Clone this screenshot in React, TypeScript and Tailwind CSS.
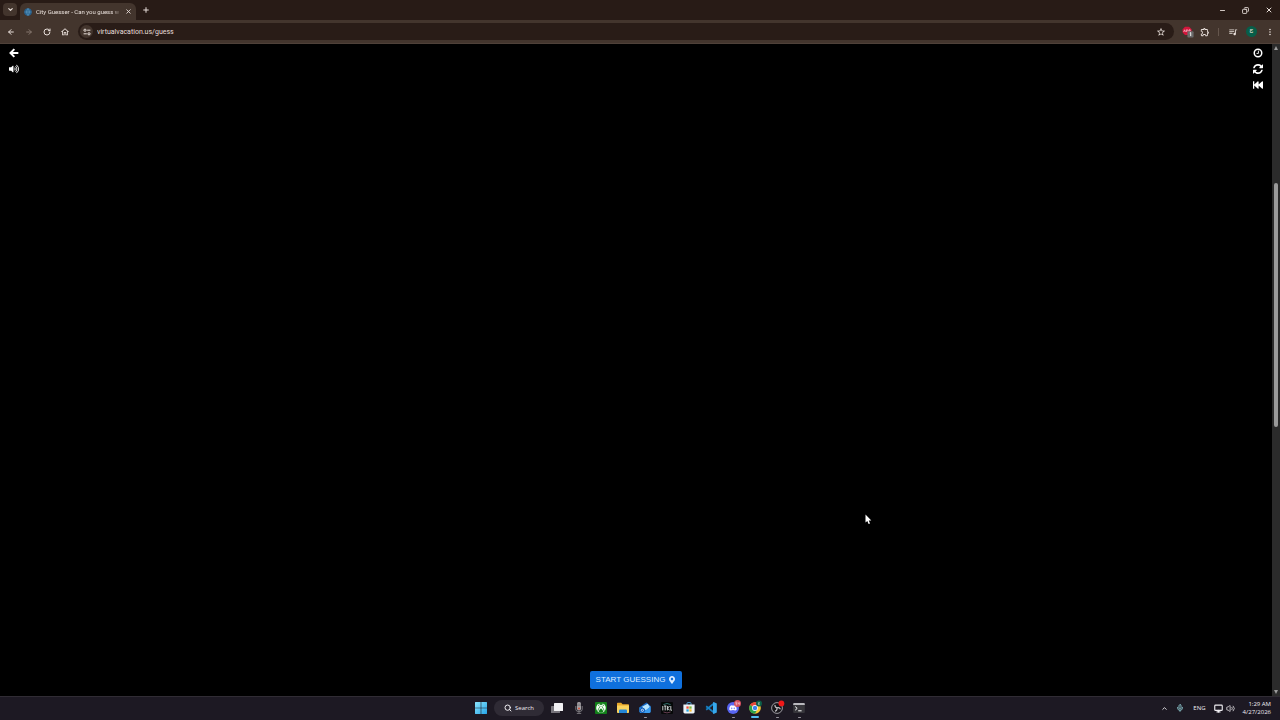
import React from "react";
import { FaFastBackward, FaMapMarkerAlt, FaVolumeUp, FaDiscord } from "react-icons/fa";
import {
  MdMoreVert,
  MdOutlineExtension,
  MdOutlineHome,
  MdQueueMusic,
  MdStarBorder,
} from "react-icons/md";
import {
  ArrowLeft,
  ArrowRight,
  ChevronDown,
  ChevronUp,
  Copy,
  Mic,
  Minus,
  Monitor,
  Plus,
  RotateCw,
  Search,
  Volume2,
  X,
} from "lucide-react";

interface TaskbarApp {
  name: string;
  icon: React.ReactNode;
  state?: "open" | "active";
}

const BackIcon = () => (
  <svg viewBox="0 0 12 12" className="size-[10px]">
    <path
      d="M6.4 1.4L1.8 6L6.4 10.6M2.4 6H11.2"
      fill="none"
      stroke="currentColor"
      strokeWidth="2.4"
    />
  </svg>
);

const ClockIcon = () => (
  <svg viewBox="0 0 12 12" className="size-[10px]">
    <circle cx="6" cy="6" r="4.5" fill="none" stroke="currentColor" strokeWidth="1.8" />
    <path d="M6.5 3.2V6.5H4.2" fill="none" stroke="currentColor" strokeWidth="1.1" />
  </svg>
);

const RefreshIcon = () => (
  <svg viewBox="0 0 1536 1536" className="size-[10px]" fill="currentColor">
    <path d="M1511 928q0 5-1 7-64 268-268 434.500T764 1536q-146 0-282.500-55T238 1324l-129 129q-19 19-45 19t-45-19-19-45V960q0-26 19-45t45-19h448q26 0 45 19t19 45-19 45l-137 137q71 66 161 102t187 36q134 0 250-65t186-179q11-17 53-117 8-23 30-23h192q13 0 22.500 9.500t9.500 22.500zM1536 128v448q0 26-19 45t-45 19h-448q-26 0-45-19t-19-45 19-45l138-138Q969 256 768 256q-134 0-250 65T332 500q-11 17-53 117-8 23-30 23H50q-13 0-22.500-9.500T18 608v-7q65-268 270-434.500T768 0q146 0 284 55.500T1297 212l130-129q19-19 45-19t45 19 19 45z" />
  </svg>
);

const WindowsIcon = () => (
  <svg viewBox="0 0 12 12" className="size-3">
    <defs>
      <linearGradient id="win" x1="0" y1="0" x2="1" y2="1">
        <stop offset="0" stopColor="#8be4fb" />
        <stop offset="1" stopColor="#26a5e8" />
      </linearGradient>
    </defs>
    <path
      fill="url(#win)"
      d="M0 .4Q0 0 .4 0H5.7V5.7H0ZM6.3 0H11.6Q12 0 12 .4V5.7H6.3ZM0 6.3H5.7V12H.4Q0 12 0 11.6ZM6.3 6.3H12V11.6Q12 12 11.6 12H6.3Z"
    />
  </svg>
);

const TaskViewIcon = () => (
  <svg viewBox="0 0 12 12" className="size-3">
    <rect x="0" y="4" width="9" height="7" rx=".6" fill="#77747b" />
    <rect x="3" y="1" width="9" height="8" rx=".6" fill="#f1f0f3" />
  </svg>
);

const RecorderIcon = () => (
  <svg viewBox="0 0 12 12" className="size-3">
    <path
      d="M2.8 4V7.5Q2.8 9.6 6 9.6T9.2 7.5V4M6 9.6V11.4M3.8 11.4H8.2"
      fill="none"
      stroke="#77757a"
      strokeWidth="1"
    />
    <rect x="4" y="0" width="4" height="8.4" rx="1.6" fill="#a5a2a6" />
    <path d="M4 2.2H8M4 3.6H8" stroke="#6d6a70" strokeWidth=".6" />
    <circle cx="6" cy="6.4" r="1" fill="#d9533d" />
  </svg>
);

const XboxIcon = () => (
  <svg viewBox="0 0 12 12" className="size-3">
    <rect width="12" height="12" rx="1" fill="#12801a" />
    <circle cx="6" cy="6" r="4.8" fill="#f4fff4" />
    <path d="M3.4 2Q5 2.2 6 3.2Q7 2.2 8.6 2Q7.4 1.100 6 1.100T3.400 2Z" fill="#12801a" />
    <path
      d="M2.6 9.6Q3.4 6.4 5 4.6Q4 3.400 3 3M9.400 9.600Q8.600 6.400 7 4.600Q8 3.400 9 3"
      fill="none"
      stroke="#12801a"
      strokeWidth=".7"
    />
    <path d="M6 6.200Q8 7.800 8.400 9.900Q6 11.400 3.600 9.900Q4 7.800 6 6.200Z" fill="#12801a" />
  </svg>
);

const FolderIcon = () => (
  <svg viewBox="0 0 12 12" className="size-3">
    <path d="M0 1.6Q0 .8 .8 .8H4.2L5.6 2.2H11.2Q12 2.2 12 3V6H0Z" fill="#e9a92c" />
    <path d="M0 3.6H12V10.2Q12 11 11.2 11H.8Q0 11 0 10.2Z" fill="#fbd45e" />
    <path d="M2 11V8.600Q2 7.600 3 7.600H9Q10 7.600 10 8.600V11Z" fill="#2486d6" />
  </svg>
);

const MailIcon = () => (
  <svg viewBox="0 0 12 12" className="size-3">
    <path d="M.5 5.2L7.4 .4L11.6 4V9.6Q11.6 11 10.2 11H2Q.5 11 .5 9.6Z" fill="#1466c3" />
    <path d="M3 4.8L8.6 1.8L11 5L6.8 8.6Z" fill="#b7e5ff" />
    <path d="M.5 5.2L6.6 8.4L11.6 4.2V9.6Q11.6 11 10.2 11H2Q.5 11 .5 9.6Z" fill="#3b9df0" />
    <circle cx="3.4" cy="8.3" r="2.6" fill="#1360bd" />
    <circle cx="3.4" cy="8.3" r="1.1" fill="none" stroke="#fff" strokeWidth=".7" />
  </svg>
);

const ControlsIcon = () => (
  <svg viewBox="0 0 12 12" className="size-3">
    <rect width="12" height="12" rx="1" fill="#060808" />
    <path d="M2.4 2.6Q6 .4 9.6 2.6" fill="none" stroke="#3d8b84" strokeWidth=".8" />
    <path d="M2.4 10Q6 11.8 9.6 10" fill="none" stroke="#8b5570" strokeWidth=".7" />
    <path
      d="M1.800 4V8.400M3 4H5.400M4.200 4V8.400M6.400 4V8.400M8.600 4L6.600 6.200L8.600 8.400M9.800 4V8.200H11"
      fill="none"
      stroke="#dfe5e4"
      strokeWidth=".9"
    />
  </svg>
);

const StoreIcon = () => (
  <svg viewBox="0 0 12 12" className="size-3">
    <path d="M4 3V1.4Q4 .6 4.8 .6H7.2Q8 .6 8 1.4V3" fill="none" stroke="#56b5ed" strokeWidth=".9" />
    <path d="M.4 2.6H11.6V10Q11.6 11.4 10.2 11.4H1.8Q.4 11.4 .4 10Z" fill="#edf3f8" />
    <path d="M3.4 4.4H5.7V6.7H3.4Z" fill="#f0533a" />
    <path d="M6.3 4.4H8.6V6.7H6.3Z" fill="#7cba35" />
    <path d="M3.4 7.3H5.7V9.6H3.4Z" fill="#28a6e5" />
    <path d="M6.3 7.3H8.6V9.6H6.3Z" fill="#fbb92c" />
  </svg>
);

const CodeIcon = () => (
  <svg viewBox="0 0 12 12" className="size-3">
    <path d="M1.200 4.200L9 10.600M1.200 7.800L9 1.400" stroke="#1680c4" strokeWidth="1.800" />
    <path d="M8.600 0L11.800 1.500V10.500L8.600 12L8 11.400V.6Z" fill="#37a8ec" />
  </svg>
);

const DiscordIcon = () => (
  <span className="relative flex size-3 items-center justify-center rounded-full bg-[#5865f2] text-white">
    <FaDiscord className="size-2" />
    <span className="absolute -top-[2px] -right-[2px] flex size-[7px] items-center justify-center rounded-full bg-[#d5505f]">
      <svg viewBox="0 0 6 6" className="size-[5px]">
        <path
          d="M2.4 1.4H1V3H2.2V4.6H.8M3.6 1.4V3.2H5.2M5.2 1.4V4.6"
          fill="none"
          stroke="#f7d9dc"
          strokeWidth=".7"
        />
      </svg>
    </span>
  </span>
);

const ChromeIcon = () => (
  <svg viewBox="0 0 12 12" className="size-3 overflow-visible">
    <circle cx="6" cy="6" r="5.8" fill="#f9c632" />
    <path d="M6 6L.98 3.1A5.8 5.8 0 0 1 11.02 3.1L6 3.4Z" fill="#e8453c" />
    <path d="M6 6L.98 3.1A5.8 5.8 0 0 0 6 11.8L8.2 7.4Z" fill="#2ba24c" />
    <circle cx="6" cy="6" r="2.9" fill="#fff" />
    <circle cx="6" cy="6" r="2.2" fill="#3d82ee" />
    <circle cx="10" cy="1.6" r="3" fill="#0c5c48" />
    <path d="M10.9 .6H9.4V2.7H10.9M9.4 1.6H10.6" fill="none" stroke="#a9d6c8" strokeWidth=".6" />
  </svg>
);

const ObsIcon = () => (
  <svg viewBox="0 0 12 12" className="size-3 overflow-visible">
    <circle cx="6" cy="6" r="5.4" fill="#17151a" stroke="#bdbbc0" strokeWidth=".8" />
    <path
      d="M6 5.8Q3.6 5.2 4 2.8M6 5.8Q8.400 5 9.400 7.200M6 5.800Q6.400 8.400 4 9.200"
      fill="none"
      stroke="#c9c7cc"
      strokeWidth="1.100"
    />
    <circle cx="10.400" cy="1.400" r="2.900" fill="#f01818" />
  </svg>
);

const TerminalIcon = () => (
  <svg viewBox="0 0 12 12" className="size-3">
    <rect x=".2" y="1" width="11.6" height="10" rx="1" fill="#37363b" />
    <path d="M.2 3V2Q.2 1 1.2 1H10.8Q11.8 1 11.8 2V3Z" fill="#b9b8bd" />
    <path d="M2.2 4.6L4.2 6.4L2.2 8.2M5.2 8.8H8.6" fill="none" stroke="#fff" strokeWidth="1" />
  </svg>
);

const ExtensionBadge = () => (
  <svg viewBox="0 0 12 12" className="size-3">
    <path d="M3 .8H7L9.6 3.2V6.4L7 9H3L.6 6.4V3.2Z" fill="#d3163c" />
    <path
      d="M1.6 6L2.6 3.8L3.4 6M4.4 6V3.8H5.6Q6.4 4.4 5.6 4.9H4.6M7 6V3.8H8.2Q8.8 4.4 8.2 4.9H7.2"
      fill="none"
      stroke="#fbdfe5"
      strokeWidth=".6"
    />
    <rect x="5.4" y="5.2" width="6.2" height="6.2" rx="1" fill="#6b6b6b" />
    <path d="M7.8 7L8.7 6.6V10" fill="none" stroke="#fff" strokeWidth=".9" />
  </svg>
);

const apps: TaskbarApp[] = [
  { name: "Task view", icon: <TaskViewIcon /> },
  { name: "Recorder", icon: <RecorderIcon /> },
  { name: "Xbox", icon: <XboxIcon /> },
  { name: "File Explorer", icon: <FolderIcon /> },
  { name: "Mail", icon: <MailIcon />, state: "open" },
  { name: "Controls", icon: <ControlsIcon /> },
  { name: "Store", icon: <StoreIcon /> },
  { name: "Code", icon: <CodeIcon /> },
  { name: "Discord", icon: <DiscordIcon />, state: "open" },
  { name: "Chrome", icon: <ChromeIcon />, state: "active" },
  { name: "OBS", icon: <ObsIcon />, state: "open" },
  { name: "Terminal", icon: <TerminalIcon />, state: "open" },
];

const TabStrip = () => (
  <div className="flex h-5 items-end bg-[#281b16] text-[#e8dfda]">
    <div className="flex w-5 justify-center pb-1">
      <button
        aria-label="Search tabs"
        className="flex h-[13px] w-[14px] items-center justify-center rounded-sm bg-[#43352d]"
      >
        <ChevronDown className="size-[7px]" strokeWidth={4} />
      </button>
    </div>
    <div className="flex h-[17px] w-[116px] items-center gap-1 rounded-t-md bg-[#43352d] pr-1 pl-1">
      <svg viewBox="0 0 8 8" className="size-2 shrink-0">
        <circle cx="4" cy="4" r="3.8" fill="#265f8c" />
        <path
          d="M4 .4V7.6M.4 4H7.6M4 .4Q.8 4 4 7.6Q7.2 4 4 .4"
          fill="none"
          stroke="#65a3c6"
          strokeWidth=".5"
        />
      </svg>
      <span className="min-w-0 flex-1 overflow-hidden text-[6px] leading-2 whitespace-nowrap [mask-image:linear-gradient(to_right,black_90%,transparent)]">
        City Guesser - Can you guess w
      </span>
      <button aria-label="Close tab" className="shrink-0">
        <X className="size-[7px]" strokeWidth={3} />
      </button>
    </div>
    <button aria-label="New tab" className="mb-1 ml-1 flex size-3 items-center justify-center">
      <Plus className="size-2" strokeWidth={3} />
    </button>
    <div className="mb-1 ml-auto flex h-3 items-center">
      <button aria-label="Minimize" className="flex w-[23px] justify-center">
        <Minus className="size-[7px]" strokeWidth={3} />
      </button>
      <button aria-label="Restore" className="flex w-[23px] justify-center">
        <Copy className="size-[7px] -scale-x-100" strokeWidth={3} />
      </button>
      <button aria-label="Close" className="flex w-[23px] justify-center">
        <X className="size-2" strokeWidth={3} />
      </button>
    </div>
  </div>
);

const Toolbar = () => (
  <div className="flex h-6 items-center border-b border-[#4f4139] bg-[#43352d] pr-[5px] pl-[2px] text-[#e8dfda]">
    <button aria-label="Back" className="flex w-[18px] justify-center">
      <ArrowLeft className="size-2" strokeWidth={3} />
    </button>
    <button aria-label="Forward" className="flex w-[18px] justify-center text-[#85776e]">
      <ArrowRight className="size-2" strokeWidth={3} />
    </button>
    <button aria-label="Reload" className="flex w-[18px] justify-center">
      <RotateCw className="size-2" strokeWidth={3} />
    </button>
    <button aria-label="Home" className="flex w-[18px] justify-center">
      <MdOutlineHome className="size-[10px]" />
    </button>
    <div className="ml-1 flex h-[17px] flex-1 items-center gap-1 rounded-full bg-[#291c17] pr-2 pl-[2px]">
      <button
        aria-label="Site information"
        className="flex size-[13px] shrink-0 items-center justify-center rounded-full bg-[#43352d]"
      >
        <svg viewBox="0 0 8 8" className="size-2" fill="none" stroke="currentColor">
          <circle cx="2" cy="2.2" r="1.1" />
          <path d="M4.2 2.2H7.4M.6 5.8H3.8" />
          <circle cx="6" cy="5.8" r="1.1" />
        </svg>
      </button>
      <input
        aria-label="Address"
        defaultValue="virtualvacation.us/guess"
        className="min-w-0 flex-1 bg-transparent text-[7px] leading-3 outline-none"
      />
      <button aria-label="Bookmark">
        <MdStarBorder className="size-[10px]" />
      </button>
    </div>
    <div className="flex items-center">
      <button aria-label="Ad blocker" className="ml-2">
        <ExtensionBadge />
      </button>
      <button aria-label="Extensions" className="ml-[6px]">
        <MdOutlineExtension className="size-[10px]" />
      </button>
      <span className="ml-2 h-2 w-px bg-[#65564d]" />
      <button aria-label="Media" className="ml-[9px]">
        <MdQueueMusic className="size-[10px]" />
      </button>
      <button
        aria-label="Profile"
        className="ml-2 flex size-[11px] items-center justify-center rounded-full bg-[#075e49] text-[7px] leading-none"
      >
        ε
      </button>
      <button aria-label="Menu" className="ml-2">
        <MdMoreVert className="size-[10px]" />
      </button>
    </div>
  </div>
);

const Scrollbar = () => (
  <div className="flex w-2 flex-col items-center bg-[#2b2b2b] py-[2px]">
    <svg viewBox="0 0 4 4" className="size-1">
      <path d="M2 0L4 4H0Z" fill="#9b9b9b" />
    </svg>
    <div className="flex-[133]" />
    <div className="w-1 flex-[244] rounded-full bg-[#9b9b9b]" />
    <div className="flex-[263]" />
    <svg viewBox="0 0 4 4" className="size-1">
      <path d="M0 0H4L2 4Z" fill="#9b9b9b" />
    </svg>
  </div>
);

const Game = () => (
  <main className="relative flex flex-1 justify-between bg-black px-[9px] pt-1 text-white">
    <div className="flex flex-col items-center gap-[6px] self-start">
      <button aria-label="Go back">
        <BackIcon />
      </button>
      <button aria-label="Sound">
        <FaVolumeUp className="size-[10px]" />
      </button>
    </div>
    <button className="mb-[7px] flex h-[18px] items-center gap-[3px] self-end rounded-xs bg-[#0f70dd] px-[6px] font-['Liberation_Sans',sans-serif] text-[8px] leading-3 text-[#dcecff]">
      START GUESSING
      <FaMapMarkerAlt className="size-2" />
    </button>
    <div className="flex flex-col items-center gap-[6px] self-start">
      <button aria-label="Timer">
        <ClockIcon />
      </button>
      <button aria-label="New city">
        <RefreshIcon />
      </button>
      <button aria-label="Restart">
        <FaFastBackward className="size-[10px]" />
      </button>
    </div>
    {/* mouse pointer */}
    <svg viewBox="0 0 7 11" className="absolute top-[470px] left-[865px] h-[11px] w-[7px]">
      <path d="M.5 .5V8.6L2.3 7L3.6 10L5 9.4L3.8 6.6H6.3Z" fill="#fff" />
    </svg>
  </main>
);

const Taskbar = () => (
  <footer className="grid h-6 grid-cols-[1fr_auto_1fr] items-center bg-[#1d1923] text-[#f0eef2] shadow-[inset_0_1px_#302c34]">
    <div />
    <div className="flex items-center">
      <button aria-label="Start" className="flex w-[22px] justify-center">
        <WindowsIcon />
      </button>
      <button className="mx-[2px] flex h-4 w-[50px] items-center justify-center gap-[3px] rounded-full bg-[#2f2b35] text-[6px] leading-2">
        <Search className="size-2" strokeWidth={3} />
        Search
      </button>
      {apps.map((app) => (
        <button
          key={app.name}
          aria-label={app.name}
          className="relative flex h-5 w-[22px] items-center justify-center"
        >
          {app.icon}
          {app.state === "open" && (
            <span className="absolute bottom-0 h-px w-[3px] rounded-full bg-[#96929b]" />
          )}
          {app.state === "active" && (
            <span className="absolute bottom-0 h-[2px] w-2 rounded-full bg-[#52bdf0]" />
          )}
        </button>
      ))}
    </div>
    <div className="flex items-center justify-end pr-[9px]">
      <ChevronUp className="size-[7px]" strokeWidth={3} />
      <Mic className="ml-2 size-2 text-[#82b6bd]" strokeWidth={3} />
      <span className="ml-[9px] text-[6px] leading-2">ENG</span>
      <Monitor className="ml-2 size-[9px]" strokeWidth={3} />
      <Volume2 className="ml-[3px] size-[9px]" strokeWidth={2} />
      <div className="ml-2 text-right text-[6px] leading-2">
        <div>1:29 AM</div>
        <div>4/27/2026</div>
      </div>
    </div>
  </footer>
);

const App: React.FC = () => {
  return (
    <div className="flex min-h-screen flex-col bg-black font-['Open_Sans',sans-serif]">
      <header className="font-['Roboto',sans-serif]">
        <TabStrip />
        <Toolbar />
      </header>
      <div className="flex flex-1">
        <Game />
        <Scrollbar />
      </div>
      <Taskbar />
    </div>
  );
};

export default App;
